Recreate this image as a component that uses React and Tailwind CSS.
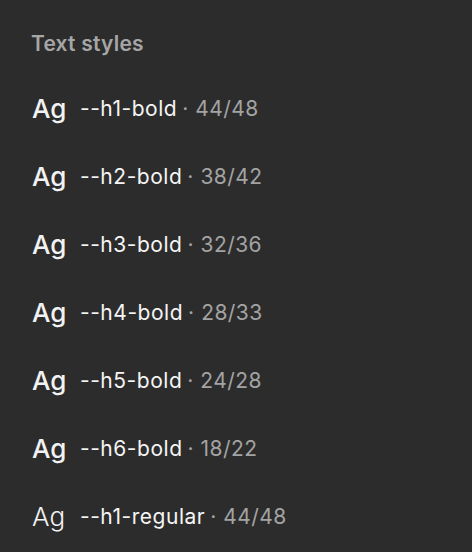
import React from "react";

const styles = [
  { name: "--h1-bold", size: "44/48", bold: true },
  { name: "--h2-bold", size: "38/42", bold: true },
  { name: "--h3-bold", size: "32/36", bold: true },
  { name: "--h4-bold", size: "28/33", bold: true },
  { name: "--h5-bold", size: "24/28", bold: true },
  { name: "--h6-bold", size: "18/22", bold: true },
  { name: "--h1-regular", size: "44/48", bold: false },
];

export default function App() {
  return (
    <div className="w-[472px] h-[552px] bg-[#2c2c2c] font-['Inter',sans-serif] overflow-hidden">
      <div className="pl-[31px] pt-[30px]">
        <h2 className="text-[21px] leading-[28px] font-semibold tracking-[0.01em] text-[#a6a6a6]">
          Text styles
        </h2>
        <div className="mt-[35px] flex flex-col gap-[36px]">
          {styles.map((s) => (
            <div key={s.name} className="flex items-center h-[32px] pl-[1px]">
              <span
                className={
                  "w-[48px] text-[26px] leading-[32px] text-[#f2f2f2] " +
                  (s.bold ? "font-medium" : "font-light")
                }
              >
                Ag
              </span>
              <span className="text-[21px] leading-[32px] tracking-[0.025em] text-[#f5f5f5]">
                {s.name}
              </span>
              <span className="text-[21px] leading-[32px] text-[#a3a3a3] ml-[5px]">·</span>
              <span className="text-[21px] leading-[32px] tracking-[0.02em] text-[#a3a3a3] ml-[7px]">
                {s.size}
              </span>
            </div>
          ))}
        </div>
      </div>
    </div>
  );
}
